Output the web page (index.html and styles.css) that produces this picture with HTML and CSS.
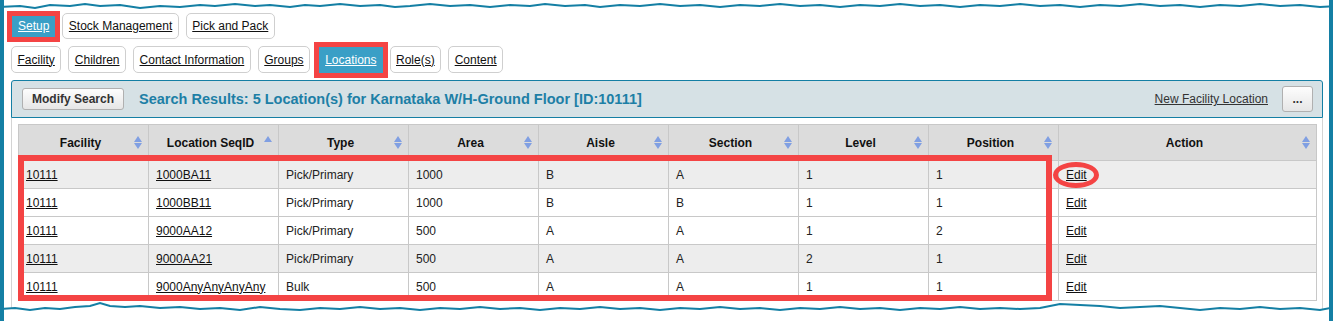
FILE: index.html
```html
<!DOCTYPE html>
<html lang="en">
<head>
    <meta charset="UTF-8">
    <title>Facility Locations</title>
    <link rel="stylesheet" href="styles.css">
</head>
<body>
    <div class="frame">
        <svg class="torn torn-top" width="1335" height="14" viewBox="0 0 1335 14">
            <path class="torn-fill" d="M0,0 L0,7 L20,6 L35,8 L50,5 L70,6 L85,4 L100,6 L120,5 L140,8 L160,6 L180,7 L200,5 L215,6 L235,4 L255,6 L270,5 L290,7 L305,5 L320,6 L340,4 L360,6 L380,5 L395,7 L410,6 L430,4 L450,6 L470,5 L490,7 L510,5 L530,6 L545,4 L565,6 L585,5 L600,7 L620,5 L640,6 L660,4 L680,6 L700,5 L720,7 L740,5 L760,6 L780,4 L800,6 L820,5 L840,7 L860,5 L880,6 L900,4 L920,6 L940,5 L960,7 L980,5 L1000,6 L1020,4 L1040,6 L1060,5 L1080,7 L1100,5 L1120,6 L1140,4 L1160,6 L1180,5 L1200,7 L1220,5 L1240,6 L1260,4 L1280,6 L1300,5 L1320,7 L1335,6 L1335,0 Z"/>
            <polyline class="torn-line" points="0,7 20,6 35,8 50,5 70,6 85,4 100,6 120,5 140,8 160,6 180,7 200,5 215,6 235,4 255,6 270,5 290,7 305,5 320,6 340,4 360,6 380,5 395,7 410,6 430,4 450,6 470,5 490,7 510,5 530,6 545,4 565,6 585,5 600,7 620,5 640,6 660,4 680,6 700,5 720,7 740,5 760,6 780,4 800,6 820,5 840,7 860,5 880,6 900,4 920,6 940,5 960,7 980,5 1000,6 1020,4 1040,6 1060,5 1080,7 1100,5 1120,6 1140,4 1160,6 1180,5 1200,7 1220,5 1240,6 1260,4 1280,6 1300,5 1320,7 1335,6"/>
        </svg>

        <div class="tabs tabs-main">
            <a class="tab active" href="#">Setup</a>
            <a class="tab" href="#">Stock Management</a>
            <a class="tab" href="#">Pick and Pack</a>
        </div>

        <div class="tabs tabs-sub">
            <a class="tab" href="#">Facility</a>
            <a class="tab" href="#">Children</a>
            <a class="tab" href="#">Contact Information</a>
            <a class="tab" href="#">Groups</a>
            <a class="tab active" href="#">Locations</a>
            <a class="tab" href="#">Role(s)</a>
            <a class="tab" href="#">Content</a>
        </div>

        <div class="results-bar">
            <button class="btn">Modify Search</button>
            <span class="results-title">Search Results: 5 Location(s) for Karnataka W/H-Ground Floor [ID:10111]</span>
            <a class="new-link" href="#">New Facility Location</a>
            <button class="btn btn-more">...</button>
        </div>

        <div class="grid-wrap">
            <div class="grid-inner">
                <table class="grid">
                    <colgroup>
                        <col class="c130"><col class="c130"><col class="c130"><col class="c130">
                        <col class="c130"><col class="c130"><col class="c130"><col class="c130">
                        <col>
                    </colgroup>
                    <thead>
                        <tr>
                            <th><div class="th-in"><span class="th-text">Facility</span><svg class="sort" width="8" height="13"><polygon points="0,6 4,0 8,6"/><polygon points="0,7 8,7 4,13"/></svg></div></th>
                            <th><div class="th-in"><span class="th-text">Location SeqID</span><svg class="sort" width="8" height="13"><polygon points="0,6 4,0 8,6"/></svg></div></th>
                            <th><div class="th-in"><span class="th-text">Type</span><svg class="sort" width="8" height="13"><polygon points="0,6 4,0 8,6"/><polygon points="0,7 8,7 4,13"/></svg></div></th>
                            <th><div class="th-in"><span class="th-text">Area</span><svg class="sort" width="8" height="13"><polygon points="0,6 4,0 8,6"/><polygon points="0,7 8,7 4,13"/></svg></div></th>
                            <th><div class="th-in"><span class="th-text">Aisle</span><svg class="sort" width="8" height="13"><polygon points="0,6 4,0 8,6"/><polygon points="0,7 8,7 4,13"/></svg></div></th>
                            <th><div class="th-in"><span class="th-text">Section</span><svg class="sort" width="8" height="13"><polygon points="0,6 4,0 8,6"/><polygon points="0,7 8,7 4,13"/></svg></div></th>
                            <th><div class="th-in"><span class="th-text">Level</span><svg class="sort" width="8" height="13"><polygon points="0,6 4,0 8,6"/><polygon points="0,7 8,7 4,13"/></svg></div></th>
                            <th><div class="th-in"><span class="th-text">Position</span><svg class="sort" width="8" height="13"><polygon points="0,6 4,0 8,6"/><polygon points="0,7 8,7 4,13"/></svg></div></th>
                            <th><div class="th-in"><span class="th-text">Action</span><svg class="sort" width="8" height="13"><polygon points="0,6 4,0 8,6"/><polygon points="0,7 8,7 4,13"/></svg></div></th>
                        </tr>
                    </thead>
                    <tbody>
                        <tr class="shade">
                            <td><a href="#">10111</a></td><td><a href="#">1000BA11</a></td><td>Pick/Primary</td><td>1000</td><td>B</td><td>A</td><td>1</td><td>1</td><td><a href="#">Edit</a></td>
                        </tr>
                        <tr>
                            <td><a href="#">10111</a></td><td><a href="#">1000BB11</a></td><td>Pick/Primary</td><td>1000</td><td>B</td><td>B</td><td>1</td><td>1</td><td><a href="#">Edit</a></td>
                        </tr>
                        <tr>
                            <td><a href="#">10111</a></td><td><a href="#">9000AA12</a></td><td>Pick/Primary</td><td>500</td><td>A</td><td>A</td><td>1</td><td>2</td><td><a href="#">Edit</a></td>
                        </tr>
                        <tr class="shade">
                            <td><a href="#">10111</a></td><td><a href="#">9000AA21</a></td><td>Pick/Primary</td><td>500</td><td>A</td><td>A</td><td>2</td><td>1</td><td><a href="#">Edit</a></td>
                        </tr>
                        <tr>
                            <td><a href="#">10111</a></td><td><a href="#">9000AnyAnyAnyAny</a></td><td>Bulk</td><td>500</td><td>A</td><td>A</td><td>1</td><td>1</td><td><a href="#">Edit</a></td>
                        </tr>
                    </tbody>
                </table>
                <!-- annotation marks -->
                <div class="mark-rows"></div>
                <div class="mark-edit"></div>
            </div>
        </div>

        <svg class="torn torn-bottom" width="1335" height="25" viewBox="0 0 1335 25">
            <path class="torn-fill" d="M0,25 L0,12 L15,11 L30,13 L45,11 L60,12 L75,10 L90,9 L100,6 L110,9 L125,10 L140,9 L160,11 L180,10 L200,12 L220,11 L240,13 L260,10 L280,12 L300,13 L320,11 L340,12 L360,10 L380,12 L400,11 L420,13 L440,11 L460,12 L480,10 L500,12 L520,11 L540,13 L560,11 L580,12 L600,10 L620,12 L640,11 L660,13 L680,11 L700,12 L720,10 L740,12 L760,11 L780,13 L800,11 L820,12 L840,10 L860,12 L880,11 L900,13 L920,11 L940,12 L960,10 L980,12 L1000,11 L1020,12 L1040,11 L1050,9 L1060,7 L1080,8 L1100,9 L1120,11 L1140,10 L1160,9 L1180,11 L1200,13 L1220,11 L1240,12 L1260,10 L1280,12 L1300,11 L1320,13 L1330,11 L1335,10 L1335,25 Z"/>
            <polyline class="torn-line" points="0,12 15,11 30,13 45,11 60,12 75,10 90,9 100,6 110,9 125,10 140,9 160,11 180,10 200,12 220,11 240,13 260,10 280,12 300,13 320,11 340,12 360,10 380,12 400,11 420,13 440,11 460,12 480,10 500,12 520,11 540,13 560,11 580,12 600,10 620,12 640,11 660,13 680,11 700,12 720,10 740,12 760,11 780,13 800,11 820,12 840,10 860,12 880,11 900,13 920,11 940,12 960,10 980,12 1000,11 1020,12 1040,11 1050,9 1060,7 1080,8 1100,9 1120,11 1140,10 1160,9 1180,11 1200,13 1220,11 1240,12 1260,10 1280,12 1300,11 1320,13 1330,11 1335,10"/>
        </svg>
    </div>
</body>
</html>
```

FILE: styles.css
```css
body {
    margin: 0;
    background: #fff;
    font-family: "Liberation Sans", Arial, sans-serif;
    font-size: 12px;
    color: #222;
}
a {
    color: #111;
}
.frame {
    position: relative;
    width: 1333px;
    height: 321px;
    box-sizing: border-box;
    border-left: 4px solid #147fa4;
    border-right: 4px solid #147fa4;
    padding: 13px 6px 0 7px;
    overflow: hidden;
}
/* torn paper edges */
.torn {
    position: absolute;
    left: -4px;
}
.torn-top {
    top: 0;
}
.torn-bottom {
    top: 297px;
}
.torn-fill {
    fill: #fff;
}
.torn-line {
    fill: none;
    stroke: #147fa4;
    stroke-width: 2;
}

.tabs {
    display: flex;
    align-items: center;
    gap: 7px;
    height: 26px;
}
.tabs-main {
    padding-left: 1px;
}
.tabs-sub {
    margin-top: 7px;
    height: 27px;
}
.tab {
    display: flex;
    align-items: center;
    height: 26px;
    box-sizing: border-box;
    padding: 0 5.5px;
    border: 1px solid #cfcfcf;
    border-radius: 5px;
    background: #fff;
    color: #111;
}
.tabs-sub .tab {
    height: 27px;
}
.tab.active {
    height: 21px;
    border: none;
    border-radius: 0;
    padding: 0 6px;
    background: #3a9fc6;
    color: #fff;
    outline: 5px solid #f44444;
}
.tabs-sub .tab.active {
    height: 26px;
    margin-left: 2px;
}

.results-bar {
    display: flex;
    align-items: center;
    height: 38px;
    box-sizing: border-box;
    margin-top: 7px;
    padding: 0 9px 0 10px;
    background: #d6e1e5;
    border: 1px solid #147fa4;
    border-radius: 3px 3px 0 0;
}
.btn {
    height: 22px;
    padding: 0 9px;
    border: 1px solid #b0b0b0;
    border-radius: 3px;
    background: linear-gradient(#fdfdfd, #e6e6e6);
    font-family: "Liberation Sans", Arial, sans-serif;
    font-size: 12px;
    font-weight: bold;
    color: #333;
}
.btn-more {
    width: 31px;
    height: 26px;
    padding: 0;
    margin-left: 14px;
}
.results-title {
    margin-left: 15px;
    font-size: 14.5px;
    font-weight: bold;
    color: #1d7fa6;
}
.new-link {
    margin-left: auto;
    color: #333;
}

.grid-wrap {
    border: 1px solid #d4d4d4;
    border-top: none;
    padding: 6px 5px 20px 6px;
}
.grid-inner {
    position: relative;
}
.grid {
    width: 100%;
    table-layout: fixed;
    border-collapse: collapse;
}
.c130 {
    width: 130px;
}
.grid th,
.grid td {
    border: 1px solid #c8c8c8;
}
.grid th {
    height: 35px;
    padding: 0 6px 0 0;
    background: #dcdcdc;
    font-weight: bold;
    color: #111;
}
.th-in {
    display: grid;
    grid-template-columns: 8px 1fr 8px;
    align-items: center;
}
.th-text {
    grid-column: 2;
    text-align: center;
}
.sort {
    grid-column: 3;
    fill: #809fe2;
}
.grid td {
    height: 27px;
    padding: 0 0 0 7px;
    background: #fff;
}
.grid tr.shade td {
    background: #ededed;
}

/* red annotation marks */
.mark-rows {
    position: absolute;
    left: 0;
    top: 31px;
    width: 1034px;
    height: 146px;
    box-sizing: border-box;
    border: 6px solid #f44444;
}
.mark-edit {
    position: absolute;
    left: 1035px;
    top: 38px;
    width: 46px;
    height: 26px;
    box-sizing: border-box;
    border: 5px solid #f44444;
    border-radius: 50%;
}
```
